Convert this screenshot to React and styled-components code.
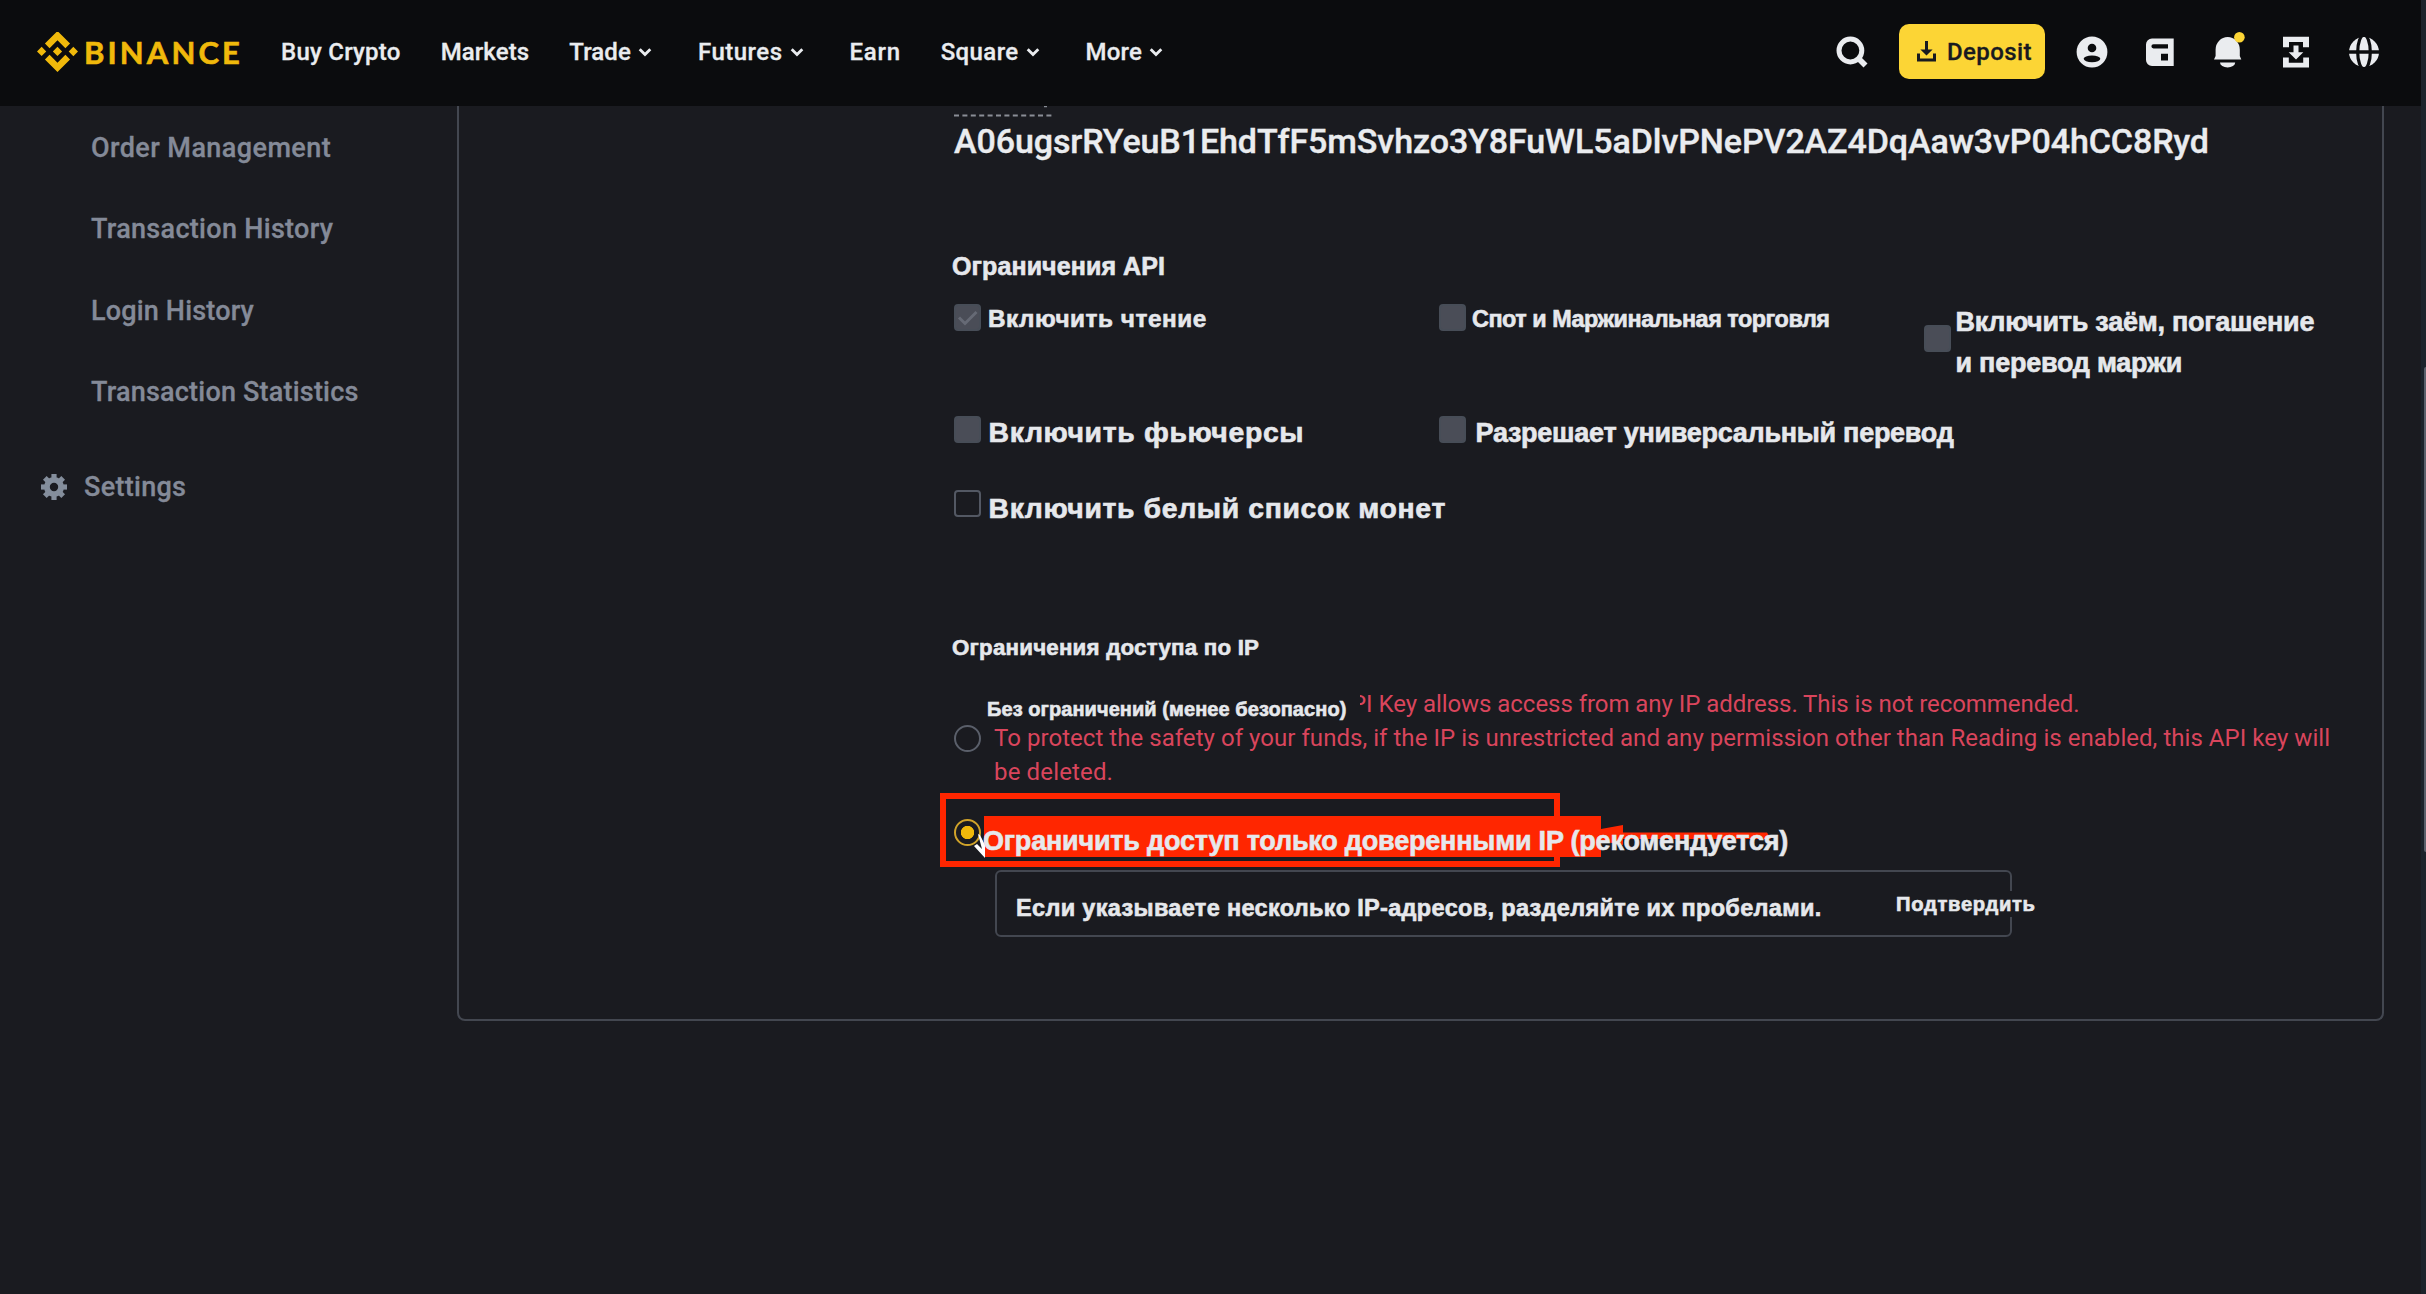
import React from "react";
import styled, { createGlobalStyle } from "styled-components";

const navItems = [
    { text: 'Buy Crypto', track: 0.25 },
    { text: 'Markets', track: 0.1 },
    { text: 'Trade', track: 0.1, menu: true },
    { text: 'Futures', track: 0.5, menu: true },
    { text: 'Earn', track: 0.7 },
    { text: 'Square', track: 0.4, menu: true },
    { text: 'More', track: 0.2, menu: true },
]

const sideItems = [
    { text: 'Order Management', track: 0.42 },
    { text: 'Transaction History', track: 0.3 },
    { text: 'Login History', track: 0.17 },
    { text: 'Transaction Statistics', track: 0.2 },
]

const gearTeeth = [0, 45, 90, 135, 180, 225, 270, 315]

function App() {
    return (
        <Window>
            <GlobalStyle />
            <Screen>
                <Header>
                    <Logo viewBox="0 0 24 24">
                        <path d="M16.624 13.9202l2.7175 2.7154-7.353 7.353-7.353-7.352 2.7175-2.7164 4.6355 4.6595 4.6356-4.6595zm4.6366-4.6366L24 12l-2.7154 2.7164L18.5682 12l2.6924-2.7164zm-9.272.001l2.7163 2.6914-2.7164 2.7174v-.001L9.2721 12l2.7164-2.7154zm-9.2722-.001L5.4088 12l-2.6914 2.6924L0 12l2.7164-2.7164zM11.9885.0115l7.353 7.329-2.7174 2.7154-4.6356-4.6356-4.6355 4.6595-2.7174-2.7154 7.353-7.353z" />
                    </Logo>
                    <Brand>BINANCE</Brand>
                    <Nav>
                        {navItems.map(item => (
                            <NavItem key={item.text}>
                                <NavText $track={item.track}>{item.text}</NavText>
                                {item.menu && <Chevron viewBox="0 0 24 24"><path d="M6.700 9.200l5.300 5.300 5.300-5.300" /></Chevron>}
                            </NavItem>
                        ))}
                    </Nav>

                    <Actions>
                        {/* search */}
                        <Icon viewBox="0 0 36 36">
                            <circle cx="16.4" cy="16.5" r="11.4" fill="none" stroke="#eaecef" strokeWidth="5" />
                            <path d="M24.5 24.5l7 7" stroke="#eaecef" strokeWidth="5.6" />
                        </Icon>
                        <Deposit>
                            <DepositIcon viewBox="0 0 19 21">
                                <path d="M8 0h3v8.5h4.6L9.5 14.6 3.4 8.5H8zM0 12.6h3v5h13v-5h3v8H0z" />
                            </DepositIcon>
                            <DepositText>Deposit</DepositText>
                        </Deposit>
                        {/* account */}
                        <Icon viewBox="0 0 36 36">
                            <circle cx="18" cy="18" r="15.4" />
                            <circle cx="18" cy="14" r="4.3" fill="#0b0c0e" />
                            <ellipse cx="18" cy="24.8" rx="8.3" ry="3.4" fill="#0b0c0e" />
                        </Icon>
                        {/* wallet */}
                        <Icon viewBox="0 0 36 36">
                            <path fillRule="evenodd" d="M10 4.5H31.7V32H10a6 6 0 0 1-6-6V10.5a6 6 0 0 1 6-6zM11.500 10.200a2.100 2.100 0 0 0 0 4.200H26V10.200zM19 19.800V26.500H26V19.800z" />
                        </Icon>
                        {/* notifications */}
                        <Icon viewBox="0 0 36 36">
                            <path d="M5.6 22V15.5a12.1 12.5 0 0 1 24.2 0V22L31.3 25.5H4zM10 28.5H25.2a7.6 5 0 0 1-15.2 0z" />
                            <circle cx="29.4" cy="3.2" r="5.3" fill="#fcd535" />
                        </Icon>
                        {/* transfer */}
                        <Icon viewBox="0 0 36 36">
                            <path d="M5 2.8H31V13.300H25V8H11V13.300H5zM5 23.500H10.800V28.700H25.200V23.500H31V33.500H5zM15.500 11.500h5V18.200H25.300L18 25.500 10.700 18.200H15.500z" />
                        </Icon>
                        {/* language */}
                        <Icon viewBox="0 0 36 36">
                            <circle cx="18" cy="18" r="15" />
                            <ellipse cx="18" cy="18" rx="6.3" ry="17" fill="none" stroke="#0b0c0e" strokeWidth="3.2" />
                            <path d="M0 18h36" stroke="#0b0c0e" strokeWidth="3.6" />
                        </Icon>
                    </Actions>
                </Header>

                <Main>
                    <Sidebar>
                        {sideItems.map(item => (
                            <SideLink key={item.text}><SideText $track={item.track}>{item.text}</SideText></SideLink>
                        ))}
                        <Settings>
                            <Gear viewBox="-13 -13 26 26">
                                <path fillRule="evenodd" d="M0-10a10 10 0 1 0 0 20a10 10 0 1 0 0-20zM0-4.200a4.200 4.200 0 1 1 0 8.400a4.200 4.200 0 1 1 0-8.400z" />
                                {gearTeeth.map(a => (
                                    <rect key={a} x="-2.6" y="-13" width="5.2" height="5" transform={`rotate(${a})`} />
                                ))}
                            </Gear>
                            <SideText $track={0.3}>Settings</SideText>
                        </Settings>
                    </Sidebar>

                    <Card>
                        <KeyUnderline viewBox="0 0 98 11">
                            <path d="M90 .5h3" strokeWidth="1.5" />
                            <path d="M0 9.500h98" strokeDasharray="5 3.4" />
                        </KeyUnderline>
                        <KeyValue>A06ugsrRYeuB1EhdTfF5mSvhzo3Y8FuWL5aDlvPNePV2AZ4DqAaw3vP04hCC8Ryd</KeyValue>

                        <SectionTitle $top={86} $size={25} $track={0.1}>Ограничения API</SectionTitle>

                        <Options>
                            <Option $lines={1}>
                                <Check $fill>
                                    <CheckMark viewBox="0 0 27 27"><path d="M5 13.500l6 6L22.500 8" /></CheckMark>
                                </Check>
                                <OptionText $left={7} $drop={2} $size={24.3} $track={0.55}>Включить чтение</OptionText>
                            </Option>
                            <Option $lines={1}>
                                <Check $fill />
                                <OptionText $left={6} $drop={4} $size={23.4} $track={-0.48}>Спот и Маржинальная торговля</OptionText>
                            </Option>
                            <Option $lines={2}>
                                <Check $fill />
                                <OptionText $left={4.5} $drop={9} $size={27} $track={-0.25}>
                                    Включить заём, погашение<br />и перевод маржи
                                </OptionText>
                            </Option>
                            <Option $lines={1}>
                                <Check $fill />
                                <OptionText $left={7.5} $drop={6} $size={28.4} $track={0.66}>Включить фьючерсы</OptionText>
                            </Option>
                            <Option $lines={1}>
                                <Check $fill />
                                <OptionText $left={9.5} $drop={7} $size={27} $track={-0.27}>Разрешает универсальный перевод</OptionText>
                            </Option>
                            <Option $lines={1} $first>
                                <Check />
                                <OptionText $left={7.5} $drop={9} $size={28.4} $track={0.63}>Включить белый список монет</OptionText>
                            </Option>
                        </Options>

                        <SectionTitle $top={109} $size={22.3} $track={0.22}>Ограничения доступа по IP</SectionTitle>

                        <Unrestricted>
                            <Radio />
                            <Warning>
                                <WarningTop>
                                    <FreeText>Без ограничений (менее безопасно)</FreeText>
                                    <WarnText $left={-9} $track={-0.05}>PI Key allows access from any IP address. This is not recommended.</WarnText>
                                </WarningTop>
                                <WarnText $track={0.045}>To protect the safety of your funds, if the IP is unrestricted and any permission other than Reading is enabled, this API key will</WarnText>
                                <WarnText $track={0.15}>be deleted.</WarnText>
                            </Warning>
                        </Unrestricted>

                        <Trusted>
                            <Radio $on />
                            <Frame />
                            <Highlight />
                            <Arrow viewBox="0 0 172 24"><path d="M0 4L22 0V7.500H166L170 14H22V20L0 16z" /></Arrow>
                            <Cursor viewBox="0 0 14 24"><path d="M5 0L7 1 12 11V24L1 12 4 10 9 15z" /></Cursor>
                            <TrustedText>Ограничить доступ только доверенными IP (рекомендуется)</TrustedText>
                        </Trusted>

                        <IpInput>
                            <Hint>Если указываете несколько IP-адресов, разделяйте их пробелами.</Hint>
                            <Confirm>Подтвердить</Confirm>
                        </IpInput>
                    </Card>
                </Main>
            </Screen>
            <Track><Thumb /></Track>
        </Window>
    )
}

export default App

const GlobalStyle = createGlobalStyle`
    * {
        box-sizing: border-box;
    }

    body {
        margin: 0;
        background-color: #1a1b20;
        font-family: Roboto, "Liberation Sans", sans-serif;
        color: #eaecef;
        overflow: hidden;
    }
`

const Window = styled.div`
    display: flex;
    width: 2426px;
    height: 1294px;
    overflow: hidden;
`

const Screen = styled.div`
    width: 2421px;
`

const Track = styled.div`
    display: flex;
    justify-content: flex-end;
    width: 5px;
    background-color: #1c232b;
`

const Thumb = styled.div`
    width: 2px;
    height: 485px;
    margin-top: 367px;
    border-radius: 2px 0 0 2px;
    background-color: #5a606b;
`

/* HEADER */
const Header = styled.header`
    display: flex;
    align-items: center;
    height: 106px;
    padding: 0 39px 3px 37px;
    background-color: #0b0c0e;
`

const Logo = styled.svg`
    width: 41px;
    height: 41px;
    fill: #f0b90b;
`

const Brand = styled.span`
    width: 196px;
    margin-left: 6px;
    font-family: Lato, sans-serif;
    font-size: 31px;
    font-weight: 700;
    letter-spacing: 3.1px;
    line-height: 40px;
    color: #f0b90b;
    -webkit-text-stroke: 0.6px #f0b90b;
`

const Nav = styled.nav`
    display: flex;
    align-items: center;
    gap: 40px;
    margin-left: 1px;
`

const NavItem = styled.a`
    display: flex;
    align-items: center;
`

const NavText = styled.span`
    font-size: 24px;
    font-weight: 500;
    line-height: 34px;
    letter-spacing: ${p => p.$track}px;
    white-space: nowrap;
    -webkit-text-stroke: 0.3px #eaecef;
`

const Chevron = styled.svg`
    width: 24px;
    height: 24px;
    margin: 0 1px 0 2px;
    fill: none;
    stroke: #eaecef;
    stroke-width: 2.8;
`

const Actions = styled.div`
    display: flex;
    align-items: center;
    gap: 32px;
    margin-left: auto;
`

const Icon = styled.svg`
    width: 36px;
    height: 36px;
    fill: #eaecef;
    overflow: visible;
`

const Deposit = styled.button`
    display: flex;
    align-items: center;
    width: 146px;
    height: 55px;
    margin: 0 -3px;
    padding: 0 0 0 18px;
    border: none;
    border-radius: 10px;
    background-color: #fcd535;
`

const DepositIcon = styled.svg`
    width: 19px;
    height: 21px;
    fill: #181a20;
`

const DepositText = styled.span`
    margin-left: 11px;
    font-family: Roboto, sans-serif;
    font-size: 24px;
    font-weight: 500;
    letter-spacing: 0.4px;
    color: #181a20;
    -webkit-text-stroke: 0.3px #181a20;
`

/* SIDEBAR */
const Main = styled.main`
    display: flex;
`

const Sidebar = styled.aside`
    width: 457px;
    padding-top: 2px;
`

const SideLink = styled.div`
    height: 81.4px;
    padding: 20px 0 0 91px;
`

const SideText = styled.span`
    font-size: 27px;
    font-weight: 500;
    line-height: 40px;
    letter-spacing: ${p => p.$track}px;
    color: #848a98;
    white-space: nowrap;
    -webkit-text-stroke: 0.3px #848a98;
`

const Settings = styled.div`
    display: flex;
    align-items: center;
    height: 40px;
    margin-top: 33px;
    padding-left: 41px;
    gap: 17px;
`

const Gear = styled.svg`
    width: 26px;
    height: 26px;
    fill: #848e9c;
`

/* API CARD */
const Card = styled.section`
    width: 1927px;
    height: 915px;
    padding-left: 495px;
    border: 2px solid #434750;
    border-top: none;
    border-radius: 0 0 8px 8px;
`

const KeyUnderline = styled.svg`
    display: block;
    width: 98px;
    height: 11px;
    stroke: #8a8e96;
    stroke-width: 2;
`

const KeyValue = styled.div`
    height: 48px;
    font-size: 34px;
    font-weight: 500;
    line-height: 48px;
    letter-spacing: -0.09px;
    white-space: nowrap;
    -webkit-text-stroke: 0.4px #eaecef;
`

const RuText = styled.span`
    font-family: "Liberation Sans", Arial, sans-serif;
    font-weight: 700;
    color: #e6e8ec;
    white-space: nowrap;
    -webkit-text-stroke: 0.6px #e6e8ec;
`

const SectionTitle = styled(RuText).attrs({ as: 'h3' })`
    height: 30px;
    margin: ${p => p.$top}px 0 0 -2px;
    font-size: ${p => p.$size}px;
    line-height: 30px;
    letter-spacing: ${p => p.$track}px;
`

const Options = styled.div`
    display: grid;
    grid-template-columns: 485px 485px 420px;
    grid-template-rows: 112px 74px 41px;
    align-items: start;
    margin-top: 16px;
`

const Option = styled.label`
    display: flex;
    align-items: center;
    height: ${p => p.$lines * 41}px;
    ${p => p.$first && 'grid-column: 1;'}
`

const Check = styled.span`
    flex: none;
    width: 27px;
    height: 27px;
    border: 2px solid ${p => p.$fill ? '#474d57' : '#535863'};
    border-radius: 4px;
    background-color: ${p => p.$fill ? '#4a4d57' : 'transparent'};
`

const CheckMark = styled.svg`
    display: block;
    width: 27px;
    height: 27px;
    margin: -2px;
    fill: none;
    stroke: #666a75;
    stroke-width: 3;
`

const OptionText = styled(RuText)`
    margin-left: ${p => p.$left}px;
    padding-top: ${p => p.$drop}px;
    font-size: ${p => p.$size}px;
    line-height: 41px;
    letter-spacing: ${p => p.$track}px;
`

/* IP ACCESS */
const Unrestricted = styled.div`
    display: flex;
    align-items: center;
    height: 102px;
    margin-top: 24px;
`

const Radio = styled.span`
    flex: none;
    width: 27px;
    height: 27px;
    border: 2px solid ${p => p.$on ? '#d0a32a' : '#5a5f6a'};
    border-radius: 50%;
    background: ${p => p.$on ? 'radial-gradient(circle, #f0b90b 6.3px, transparent 7px)' : 'none'};
`

const Warning = styled.div`
    display: flex;
    flex-direction: column;
    margin-left: 13px;
`

const WarningTop = styled.div`
    display: flex;
    height: 34px;
    margin-left: -7px;
`

/* sits over the start of the warning line */
const FreeText = styled(RuText)`
    position: relative;
    z-index: 1;
    width: 373px;
    height: 34px;
    padding-top: 5px;
    background-color: #1a1b20;
    font-size: 20px;
    line-height: 34px;
    letter-spacing: 0.07px;
`

const WarnText = styled.span`
    margin-left: ${p => p.$left || 0}px;
    font-size: 24px;
    line-height: 34px;
    letter-spacing: ${p => p.$track}px;
    color: #d9455c;
    white-space: nowrap;
`

const Trusted = styled.div`
    position: relative;
    display: flex;
    align-items: center;
    height: 41px;
    margin-top: 23px;
`

const Frame = styled.div`
    position: absolute;
    top: -19px;
    left: -14px;
    width: 620px;
    height: 74px;
    border: 6px solid #ff2600;
`

const Highlight = styled.div`
    position: absolute;
    top: 4px;
    left: 30px;
    width: 617px;
    height: 41px;
    background-color: #ff2600;
`

const Arrow = styled.svg`
    position: absolute;
    top: 13px;
    left: 647px;
    width: 172px;
    height: 24px;
    fill: #ff2600;
`

const Cursor = styled.svg`
    position: absolute;
    top: 22px;
    left: 19px;
    width: 14px;
    height: 24px;
    fill: #fff;
`

const TrustedText = styled(RuText)`
    position: relative;
    margin-left: 2px;
    padding-top: 17px;
    font-size: 27px;
    line-height: 41px;
    letter-spacing: -0.2px;
`

const IpInput = styled.div`
    display: flex;
    align-items: center;
    width: 1017px;
    height: 67px;
    margin: 17px 0 0 41px;
    padding-left: 19px;
    border: 2px solid #434750;
    border-radius: 6px;
`

const Hint = styled(RuText)`
    padding-top: 9px;
    font-size: 23.5px;
    letter-spacing: 0.33px;
`

const Confirm = styled(RuText)`
    width: 142px;
    height: 26px;
    margin: 0 -28px 0 auto;
    background-color: #1a1b20;
    font-size: 20.2px;
    line-height: 27px;
    letter-spacing: 0.7px;
`
